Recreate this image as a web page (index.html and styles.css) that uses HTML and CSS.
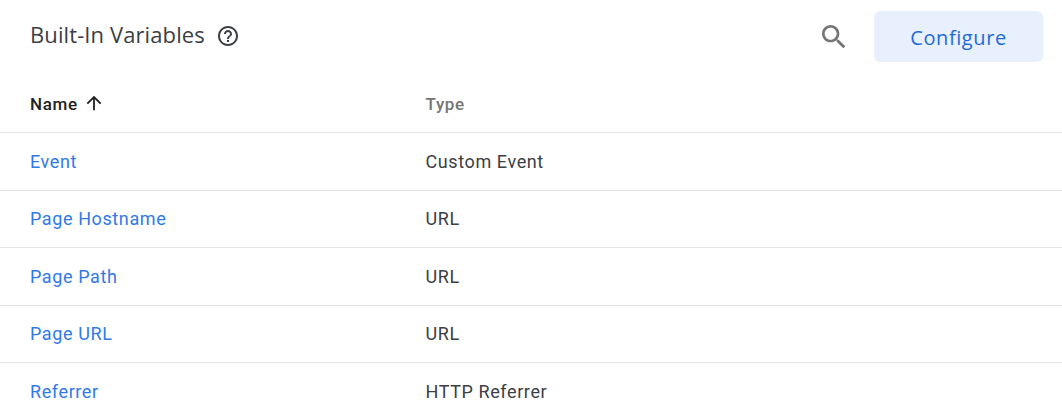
FILE: index.html
```html
<!DOCTYPE html>
<html>
<head>
  <meta charset="UTF-8">
  <title>Built-In Variables</title>
  <link rel="stylesheet" href="styles.css">
</head>
<body>
  <div class="header">
    <h1 class="title">Built-In Variables</h1>
    <svg class="help" viewBox="0 0 24 24" width="24" height="24">
      <path d="M11 18h2v-2h-2v2zm1-16C6.48 2 2 6.48 2 12s4.48 10 10 10 10-4.48 10-10S17.52 2 12 2zm0 18c-4.41 0-8-3.59-8-8s3.59-8 8-8 8 3.59 8 8-3.59 8-8 8zm0-14c-2.21 0-4 1.79-4 4h2c0-1.1.9-2 2-2s2 .9 2 2c0 2-3 1.75-3 5h2c0-2.25 3-2.5 3-5 0-2.21-1.79-4-4-4z"/>
    </svg>
    <svg class="search" viewBox="0 0 24 24" width="32" height="32">
      <path d="M15.5 14h-.79l-.28-.27C15.41 12.59 16 11.11 16 9.5 16 5.91 13.09 3 9.5 3S3 5.91 3 9.5 5.91 16 9.5 16c1.61 0 3.09-.59 4.23-1.57l.27.28v.79l5 4.99L20.49 19l-4.99-5zm-6 0C7.01 14 5 11.99 5 9.5S7.01 5 9.5 5 14 7.01 14 9.5 11.99 14 9.5 14z"/>
    </svg>
    <button class="configure">Configure</button>
  </div>

  <div class="table">
    <div class="row head">
      <div class="name">Name
        <svg class="sort" viewBox="0 0 24 24" width="22" height="22">
          <path d="M4 12l1.41 1.41L11 7.83V20h2V7.83l5.58 5.59L20 12l-8-8-8 8z"/>
        </svg>
      </div>
      <div class="type">Type</div>
    </div>
    <div class="row">
      <a href="#" class="name">Event</a>
      <div class="type">Custom Event</div>
    </div>
    <div class="row">
      <a href="#" class="name">Page Hostname</a>
      <div class="type">URL</div>
    </div>
    <div class="row">
      <a href="#" class="name">Page Path</a>
      <div class="type">URL</div>
    </div>
    <div class="row">
      <a href="#" class="name">Page URL</a>
      <div class="type">URL</div>
    </div>
    <div class="row">
      <a href="#" class="name">Referrer</a>
      <div class="type">HTTP Referrer</div>
    </div>
  </div>
</body>
</html>
```

FILE: styles.css
```css
* {
  margin: 0;
  padding: 0;
  box-sizing: border-box;
}
html, body {
  height: 416px;
  overflow: hidden;
}
body {
  background: #fff;
  font-family: Roboto, "Liberation Sans", sans-serif;
}
a {
  text-decoration: none;
}
.header {
  display: flex;
  align-items: center;
  height: 73px;
  padding: 0 19px 0 30px;
}
.title {
  margin-bottom: 5px;
  font-family: "Open Sans", Roboto, sans-serif;
  font-size: 22px;
  font-weight: 400;
  letter-spacing: 0.1px;
  color: #3c4043;
}
.help {
  margin-left: 11px;
  margin-bottom: 1px;
  fill: #3c4043;
}
.search {
  margin-left: auto;
  margin-right: 24px;
  fill: #757575;
}
.configure {
  width: 169px;
  height: 51px;
  padding-top: 2px;
  border: 0;
  border-radius: 6px;
  background: #e8f0fe;
  color: #1f6ad8;
  font-family: "Open Sans", Roboto, sans-serif;
  font-size: 20px;
  font-weight: 500;
  letter-spacing: 0.6px;
}
.row {
  display: flex;
  align-items: center;
  height: 57.5px;
  padding-left: 30px;
  border-top: 1px solid #e3e3e3;
  font-size: 18px;
  font-weight: 400;
  letter-spacing: 0.6px;
  color: #3c4043;
}
.row.head {
  height: 59px;
  padding-top: 2px;
  border-top: 0;
  font-size: 17px;
  letter-spacing: 0.65px;
}
.name {
  display: flex;
  align-items: center;
  width: 395.5px;
  color: #3079e8;
}
.head .name {
  color: #212121;
  font-weight: 500;
}
.head .type {
  color: #757575;
  font-weight: 500;
}
.sort {
  margin-left: 5px;
  margin-top: -2px;
  fill: #212121;
}
```
